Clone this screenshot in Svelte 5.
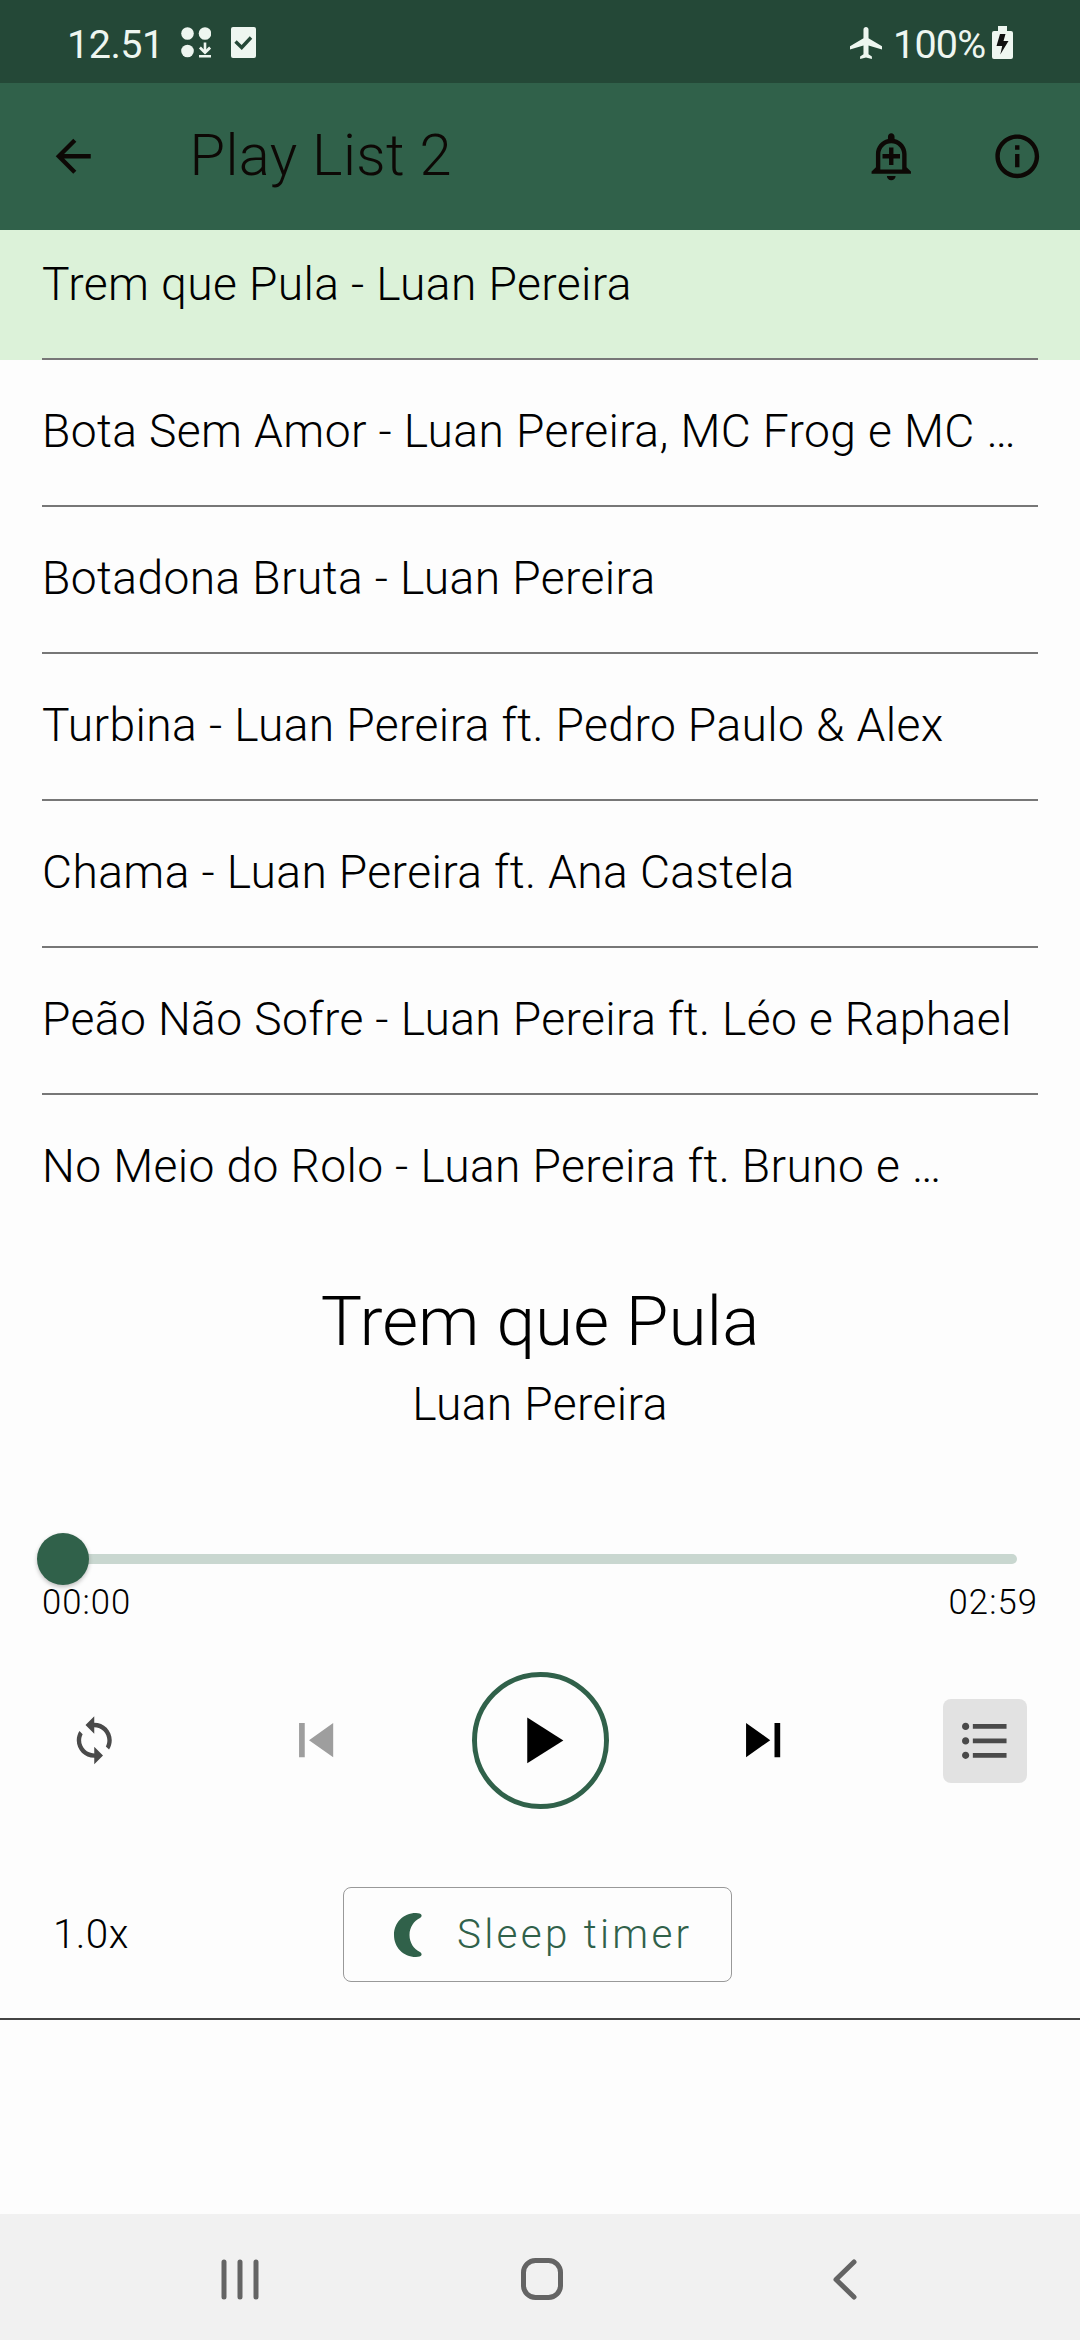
<script>
  let tracks = [
    "Trem que Pula - Luan Pereira",
    "Bota Sem Amor - Luan Pereira, MC Frog e MC …",
    "Botadona Bruta - Luan Pereira",
    "Turbina - Luan Pereira ft. Pedro Paulo & Alex",
    "Chama - Luan Pereira ft. Ana Castela",
    "Peão Não Sofre - Luan Pereira ft. Léo e Raphael",
    "No Meio do Rolo - Luan Pereira ft. Bruno e …",
  ];
  let current = 0;
  let position = 0;
  const duration = 179;

  $: [title, artist] = tracks[current].split(" - ");
  $: percent = (position / duration) * 100;

  const pad = n => String(n).padStart(2, "0");
  const time = s => `${pad(Math.floor(s / 60))}:${pad(s % 60)}`;

  const play = i => {
    current = i;
    position = 0;
  };
</script>

<style>
  :global(body) {
    background: #fdfdfd;
  }

  .screen {
    --green: #30614a;
    --dark-green: #244837;
    --gray: #4a4a4a;
    display: flex;
    flex-direction: column;
    width: 1080px;
    height: 2340px;
    overflow: hidden;
    background: #fdfdfd;
    color: #000;
    font-family: Roboto, "Noto Sans", sans-serif;
    font-weight: 300;
  }

  svg {
    display: block;
    fill: currentColor;
    flex: none;
  }

  button {
    display: block;
    margin: 0;
    padding: 0;
    border: 0;
    background: none;
    color: inherit;
    font: inherit;
    text-align: left;
  }

  .status {
    display: flex;
    align-items: center;
    flex: none;
    box-sizing: border-box;
    height: 83px;
    padding: 2px 67px 0;
    background: var(--dark-green);
    color: #eef6f0;
    font-size: 39.5px;
    font-weight: 400;
    line-height: 46px;
  }
  .status span {
    padding-top: 4px;
  }
  .status .clock {
    width: 114px;
    letter-spacing: -0.5px;
  }
  .status .check {
    margin-left: 20px;
  }
  .status .plane {
    margin-left: auto;
  }
  .status .level {
    width: 99px;
    margin-left: 11px;
    letter-spacing: -0.8px;
  }

  header {
    display: flex;
    align-items: center;
    flex: none;
    box-sizing: border-box;
    height: 147px;
    padding: 0 37px 0 47px;
    background: var(--green);
    color: #0d0805;
  }
  header h1 {
    flex: 1;
    margin: 0 0 0 90px;
    padding-bottom: 3px;
    font-size: 57.75px;
    font-weight: 300;
    line-height: 68px;
    letter-spacing: 0.4px;
  }
  header .info {
    margin-left: 73px;
  }

  .list {
    display: flex;
    flex-direction: column;
    justify-content: flex-end;
    flex: none;
    height: 1012px;
    margin: 0 0 -12px;
    padding: 0;
    list-style: none;
    overflow: hidden;
  }
  .list li {
    flex: none;
    height: 147px;
    padding: 0 42px;
  }
  .list li.current {
    background: #dcf2d9;
  }
  .list button {
    box-sizing: border-box;
    width: 100%;
    height: 147px;
    padding-bottom: 3px;
    border-bottom: 2px solid #777;
    font-size: 46.2px;
    letter-spacing: 0.39px;
    line-height: 54px;
    white-space: nowrap;
  }
  .list li:last-child button {
    border-bottom-color: transparent;
  }

  .player {
    flex: none;
    box-sizing: border-box;
    height: 790px;
    padding: 48px 42px 0;
    border-bottom: 2px solid #444;
  }
  .player h2 {
    margin: 0;
    font-size: 69.3px;
    font-weight: 300;
    line-height: 88px;
    text-align: center;
  }
  .player .artist {
    margin: 8px 0 0;
    font-size: 46.2px;
    letter-spacing: 0.39px;
    line-height: 60px;
    text-align: center;
  }

  .slider {
    height: 10px;
    margin: 120px 21px 0;
    border-radius: 5px;
    background: #c9d7d0;
  }
  .slider .thumb {
    position: relative;
    top: -21px;
    width: 52px;
    height: 52px;
    margin-left: -26px;
    border-radius: 50%;
    background: var(--green);
    box-shadow: 0 2px 4px rgba(0, 0, 0, 0.25);
  }

  .times {
    display: flex;
    justify-content: space-between;
    margin-top: 17px;
    font-size: 34.65px;
    letter-spacing: 1.05px;
    line-height: 42px;
  }

  .controls {
    display: grid;
    grid-template-columns: 105px 338px 110px 337px 106px;
    align-items: center;
    justify-items: center;
    height: 137px;
    margin-top: 49px;
  }
  .controls .loop {
    color: var(--gray);
  }
  .controls .previous {
    color: #9e9e9e;
  }
  .controls .play {
    display: flex;
    align-items: center;
    justify-content: center;
    box-sizing: border-box;
    width: 137px;
    height: 137px;
    border: 5px solid var(--green);
    border-radius: 50%;
  }
  .controls .queue {
    display: flex;
    align-items: center;
    justify-content: center;
    width: 84px;
    height: 84px;
    border-radius: 8px;
    background: #e2e2e2;
    color: var(--gray);
  }

  .extras {
    display: flex;
    align-items: center;
    height: 95px;
    margin-top: 78px;
    font-size: 40.4px;
    line-height: 48px;
  }
  .extras .speed {
    width: 301px;
    box-sizing: border-box;
    padding-left: 11px;
    letter-spacing: 0.4px;
  }
  .extras .sleep {
    display: flex;
    align-items: center;
    gap: 34px;
    box-sizing: border-box;
    width: 389px;
    height: 95px;
    padding-left: 49px;
    border: 1px solid #999;
    border-radius: 8px;
    color: var(--green);
    letter-spacing: 3.28px;
    white-space: nowrap;
  }

  .navigation {
    display: flex;
    flex: none;
    justify-content: space-between;
    box-sizing: border-box;
    height: 126px;
    margin-top: auto;
    padding: 44px 221px 0;
    background: #f1f1f1;
    color: #646464;
  }
  .navigation svg {
    fill: none;
    stroke: currentColor;
    stroke-width: 5;
    stroke-linecap: round;
    stroke-linejoin: round;
  }
  .navigation .home {
    margin-left: -4px;
  }
</style>

<div class="screen">
  <div class="status">
    <span class="clock">12.51</span>
    <svg width="30" height="31" viewBox="0 0 30 31">
      <circle cx="6.5" cy="6.5" r="6.3" />
      <circle cx="24" cy="6.5" r="6.3" />
      <circle cx="6.5" cy="24" r="6.3" />
      <path d="M22.700 15.500h2.600V24h-2.600zM18 27.900h12v2.700H18z" />
      <path d="M18.900 20.600l5.100 4.900 5.100-4.900" fill="none" stroke="currentColor" stroke-width="2.800" />
    </svg>
    <svg class="check" width="25" height="31" viewBox="0 0 25 31">
      <rect width="25" height="31" rx="2" />
      <path d="M4.500 14.500l6.200 6L20 10.500" fill="none" stroke="#244837" stroke-width="3.400" />
    </svg>
    <svg class="plane" width="32" height="32" viewBox="2.500 2 19 20" preserveAspectRatio="none">
      <path d="M21.500 16v-2l-8-5V3.500c0-.83-.67-1.500-1.500-1.500s-1.500.67-1.500 1.500V9l-8 5v2l8-2.500V19l-2 1.500V22l3.500-1 3.500 1v-1.500l-2-1.500v-5.500l8 2.500z" />
    </svg>
    <span class="level">100%</span>
    <svg width="21" height="33" viewBox="0 0 21 33">
      <path d="M6 0h9v5h4a2 2 0 0 1 2 2v24a2 2 0 0 1-2 2H2a2 2 0 0 1-2-2V7a2 2 0 0 1 2-2h4z" />
      <path fill="#111" d="M8 8h5.500l-2 7h5L8.300 28.500l1.900-8.500H4.500z" />
    </svg>
  </div>

  <header>
    <svg width="52.500" height="52.500" viewBox="0 0 24 24">
      <path d="M20 11H7.830l5.590-5.590L12 4l-8 8 8 8 1.410-1.410L7.830 13H20v-2z" />
    </svg>
    <h1>Play List 2</h1>
    <svg width="52.500" height="52.500" viewBox="0 0 24 24">
      <path d="M10.010 21.010c0 1.100.89 1.990 1.990 1.990s1.990-.89 1.990-1.990h-3.980zM12 6c2.760 0 5 2.240 5 5v7H7v-7c0-2.760 2.240-5 5-5zm0-4.500c-.83 0-1.500.67-1.500 1.500v1.170C7.360 4.850 5 7.650 5 11v6l-2 2v1h18v-1l-2-2v-6c0-3.350-2.360-6.150-5.500-6.830V3c0-.83-.67-1.500-1.500-1.500zM13 8h-2v3H8v2h3v3h2v-3h3v-2h-3V8z" />
    </svg>
    <svg class="info" width="52.500" height="52.500" viewBox="0 0 24 24">
      <path d="M11 7h2v2h-2zm0 4h2v6h-2zm1-9C6.480 2 2 6.480 2 12s4.480 10 10 10 10-4.480 10-10S17.520 2 12 2zm0 18c-4.410 0-8-3.590-8-8s3.590-8 8-8 8 3.590 8 8-3.590 8-8 8z" />
    </svg>
  </header>

  <ul class="list">
    {#each tracks as track, i}
      <li class:current={i === current}>
        <button on:click={() => play(i)}>{track}</button>
      </li>
    {/each}
  </ul>

  <section class="player">
    <h2>{title}</h2>
    <p class="artist">{artist}</p>

    <div class="slider">
      <div class="thumb" style="left: {percent}%"></div>
    </div>
    <div class="times">
      <span>{time(position)}</span>
      <span>{time(duration)}</span>
    </div>

    <div class="controls">
      <button class="loop" aria-label="Loop">
        <svg width="52.500" height="52.500" viewBox="0 0 24 24">
          <path d="M12 4V1L8 5l4 4V6c3.310 0 6 2.690 6 6 0 1.010-.25 1.970-.7 2.800l1.460 1.460C19.540 15.030 20 13.570 20 12c0-4.420-3.580-8-8-8zm0 14c-3.310 0-6-2.690-6-6 0-1.010.25-1.970.7-2.800L5.240 7.740C4.460 8.970 4 10.430 4 12c0 4.420 3.580 8 8 8v3l4-4-4-4v3z" />
        </svg>
      </button>
      <button class="previous" aria-label="Previous">
        <svg width="68.250" height="68.250" viewBox="0 0 24 24">
          <path d="M6 6h2v12H6zm3.500 6l8.500 6V6z" />
        </svg>
      </button>
      <button class="play" aria-label="Play">
        <svg width="78.750" height="78.750" viewBox="0 0 24 24">
          <path d="M8 5v14l11-7z" />
        </svg>
      </button>
      <button class="next" aria-label="Next">
        <svg width="68.250" height="68.250" viewBox="0 0 24 24">
          <path d="M6 18l8.500-6L6 6v12zM16 6v12h2V6h-2z" />
        </svg>
      </button>
      <button class="queue" aria-label="Queue">
        <svg width="57.750" height="57.750" viewBox="0 0 24 24">
          <path d="M4 10.500c-.83 0-1.500.67-1.500 1.500s.67 1.500 1.500 1.500 1.500-.67 1.500-1.500-.67-1.500-1.500-1.500zm0-6c-.83 0-1.500.67-1.500 1.500S3.170 7.500 4 7.500 5.500 6.830 5.500 6 4.830 4.500 4 4.500zm0 12c-.83 0-1.500.68-1.500 1.500s.68 1.500 1.500 1.500 1.500-.68 1.500-1.500-.67-1.500-1.500-1.500zM7 19h14v-2H7v2zm0-6h14v-2H7v2zm0-8v2h14V5H7z" />
        </svg>
      </button>
    </div>

    <div class="extras">
      <button class="speed">1.0x</button>
      <button class="sleep">
        <svg width="30" height="46" viewBox="0 0 30 46">
          <path d="M23 1C10 1 1 11 1 23s9 22 22 22c6 0 7-3 4-5-6-3-10.500-9-10.500-17S21 9 27 6c3-2 2-5-4-5z" />
        </svg>
        Sleep timer
      </button>
    </div>
  </section>

  <nav class="navigation">
    <svg width="38" height="44" viewBox="0 0 38 44">
      <path d="M3 4v35M19 4v35M35 4v35" />
    </svg>
    <svg class="home" width="44" height="44" viewBox="0 0 44 44">
      <rect x="3.500" y="2.500" width="37" height="37" rx="12" />
    </svg>
    <svg width="30" height="44" viewBox="0 0 30 44">
      <path d="M25 4L7 21.500 25 39" />
    </svg>
  </nav>
</div>
